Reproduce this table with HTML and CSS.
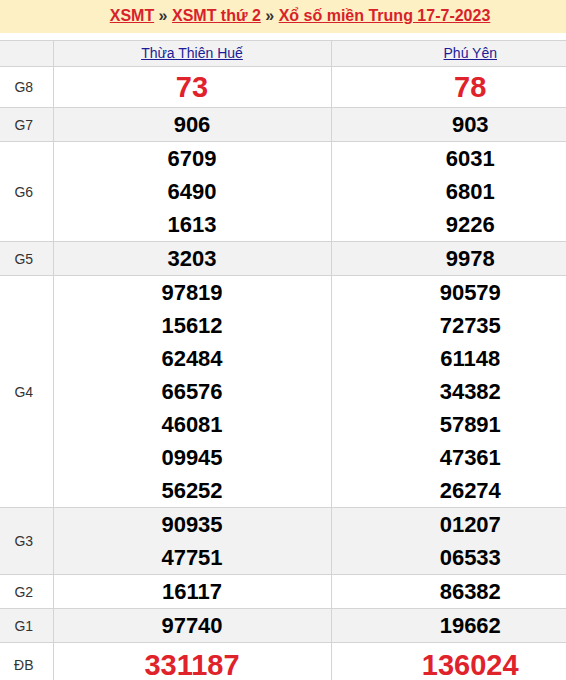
FILE: index.html
```html
<!DOCTYPE html>
<html lang="vi">
<head>
<meta charset="utf-8">
<title>XSMT 17-7-2023</title>
<link rel="stylesheet" href="styles.css">
</head>
<body>
<div class="page">
  <div class="crumbs">
    <a href="#">XSMT</a> » <a href="#">XSMT thứ 2</a> » <a href="#">Xổ số miền Trung 17-7-2023</a>
  </div>
  <table class="results">
    <colgroup><col class="c-label"><col class="c-prov"><col class="c-last"></colgroup>
    <thead>
      <tr class="head"><th></th><th><a href="#">Thừa Thiên Huế</a></th><th class="last"><a href="#">Phú Yên</a></th></tr>
    </thead>
    <tbody>
      <tr class="g8"><td class="lbl">G8</td><td class="red"><div>73</div></td><td class="red last"><div>78</div></td></tr>
      <tr class="alt"><td class="lbl">G7</td><td><div>906</div></td><td class="last"><div>903</div></td></tr>
      <tr><td class="lbl">G6</td><td><div>6709</div><div>6490</div><div>1613</div></td><td class="last"><div>6031</div><div>6801</div><div>9226</div></td></tr>
      <tr class="alt"><td class="lbl">G5</td><td><div>3203</div></td><td class="last"><div>9978</div></td></tr>
      <tr><td class="lbl">G4</td>
        <td><div>97819</div><div>15612</div><div>62484</div><div>66576</div><div>46081</div><div>09945</div><div>56252</div></td>
        <td class="last"><div>90579</div><div>72735</div><div>61148</div><div>34382</div><div>57891</div><div>47361</div><div>26274</div></td></tr>
      <tr class="alt"><td class="lbl">G3</td><td><div>90935</div><div>47751</div></td><td class="last"><div>01207</div><div>06533</div></td></tr>
      <tr><td class="lbl">G2</td><td><div>16117</div></td><td class="last"><div>86382</div></td></tr>
      <tr class="alt"><td class="lbl">G1</td><td><div>97740</div></td><td class="last"><div>19662</div></td></tr>
      <tr class="db"><td class="lbl">ĐB</td><td class="red"><div>331187</div></td><td class="red last"><div>136024</div></td></tr>
    </tbody>
  </table>
</div>
</body>
</html>
```
FILE: styles.css
```css
html, body {
  margin: 0;
  padding: 0;
  background: #fff;
}
body {
  font-family: "Liberation Sans", Arial, sans-serif;
  color: #000;
}
.page {
  width: 566px;
}
.crumbs {
  background: #fdf0c4;
  height: 33px;
  line-height: 31px;
  padding-left: 34px;
  text-align: center;
  font-size: 16px;
  font-weight: bold;
  color: #333;
  margin-bottom: 7px;
}
.crumbs a {
  color: #d8222a;
  text-decoration: underline;
}
.results {
  width: 566px;
  border-collapse: collapse;
  table-layout: fixed;
}
.c-label { width: 53px; }
.c-prov { width: 278px; }
.c-last { width: 235px; }
.results th, .results td {
  border: 1px solid #d4d4d4;
  padding: 0;
  text-align: center;
  vertical-align: middle;
}
.results tr > :first-child { border-left: none; }
.results .last {
  border-right: none;
  padding-left: 43px;
}
.head th {
  background: #f2f2f2;
  height: 25px;
  font-size: 14px;
  font-weight: normal;
  line-height: 25px;
}
.head a {
  color: #1c1c96;
  text-decoration: underline;
}
.results td div {
  font-size: 22px;
  font-weight: bold;
  line-height: 33px;
}
.results td.lbl {
  font-size: 14px;
  color: #333;
  padding-right: 5px;
}
.alt td { background: #f2f2f2; }
.g8 td div {
  line-height: 40px;
}
.red div {
  color: #e0232b;
}
.results td.red div {
  font-size: 29px;
}
.db td div {
  line-height: 44px;
}
```
